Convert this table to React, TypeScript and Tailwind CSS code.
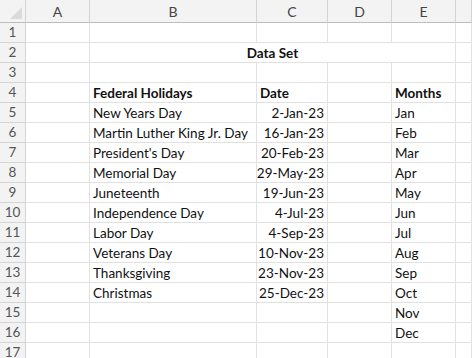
import React from "react";

const cols = ["A", "B", "C", "D", "E", ""];

const holidays = [
  { name: "New Years Day", date: "2-Jan-23" },
  { name: "Martin Luther King Jr. Day", date: "16-Jan-23" },
  { name: "President's Day", date: "20-Feb-23" },
  { name: "Memorial Day", date: "29-May-23" },
  { name: "Juneteenth", date: "19-Jun-23" },
  { name: "Independence Day", date: "4-Jul-23" },
  { name: "Labor Day", date: "4-Sep-23" },
  { name: "Veterans Day", date: "10-Nov-23" },
  { name: "Thanksgiving", date: "23-Nov-23" },
  { name: "Christmas", date: "25-Dec-23" },
];

const months = ["Jan", "Feb", "Mar", "Apr", "May", "Jun", "Jul", "Aug", "Sep", "Oct", "Nov", "Dec"];

// every grid cell is 20px tall, line included
const cell =
  "h-5 border-r border-b border-[#e1e1e1] flex items-center pt-[1px] px-[3px] leading-[19px] whitespace-nowrap overflow-hidden";
const rowHead =
  "h-5 border-r border-b border-[#d4d4d4] bg-[#f3f3f3] flex items-center justify-center leading-[19px] text-[13.5px] text-[#555]";

const App = () => {
  const rows: { b?: string; c?: string; e?: string; bold?: boolean; merged?: string }[] = [
    {},
    { merged: "Data Set" },
    {},
    { b: "Federal Holidays", c: "Date", e: "Months", bold: true },
  ];
  for (let i = 0; i < 12; i++) {
    rows.push({ b: holidays[i]?.name, c: holidays[i]?.date, e: months[i] });
  }
  rows.push({});

  return (
    <div
      className="w-[472px] h-[358px] overflow-hidden bg-white text-[13.5px] text-[#111]"
      style={{ fontFamily: "Lato, 'Liberation Sans', sans-serif" }}
    >
      <div className="grid grid-cols-[26px_64px_167px_71px_64px_64px_1fr] grid-rows-[23px] auto-rows-[20px]">
        {/* column header */}
        <div className="h-[23px] bg-[#f3f3f3] border-r border-b border-r-[#d4d4d4] border-b-[#bdbdbd] relative">
          <div className="absolute right-[3px] bottom-[3px] w-0 h-0 border-l-[12px] border-l-transparent border-b-[12px] border-b-[#dadada]" />
        </div>
        {cols.map((c, i) => (
          <div
            key={i}
            className="h-[23px] bg-[#f3f3f3] border-r border-r-[#d4d4d4] border-b border-b-[#bdbdbd] flex items-center justify-center pt-[1px] leading-[20px] text-[14px] text-[#444]"
          >
            {c}
          </div>
        ))}

        {rows.map((r, i) => (
          <React.Fragment key={i}>
            <div className={rowHead}>{i + 1}</div>
            <div className={cell} />
            {r.merged ? (
              <div className={`${cell} col-span-4 justify-center font-bold`}>{r.merged}</div>
            ) : (
              <>
                <div className={`${cell} ${r.bold ? "font-bold" : ""}`}>{r.b}</div>
                <div className={`${cell} ${r.bold ? "font-bold" : "justify-end"}`}>{r.c}</div>
                <div className={cell} />
                <div className={`${cell} ${r.bold ? "font-bold" : ""}`}>{r.e}</div>
              </>
            )}
            <div className={cell} />
          </React.Fragment>
        ))}
      </div>
    </div>
  );
};

export default App;
